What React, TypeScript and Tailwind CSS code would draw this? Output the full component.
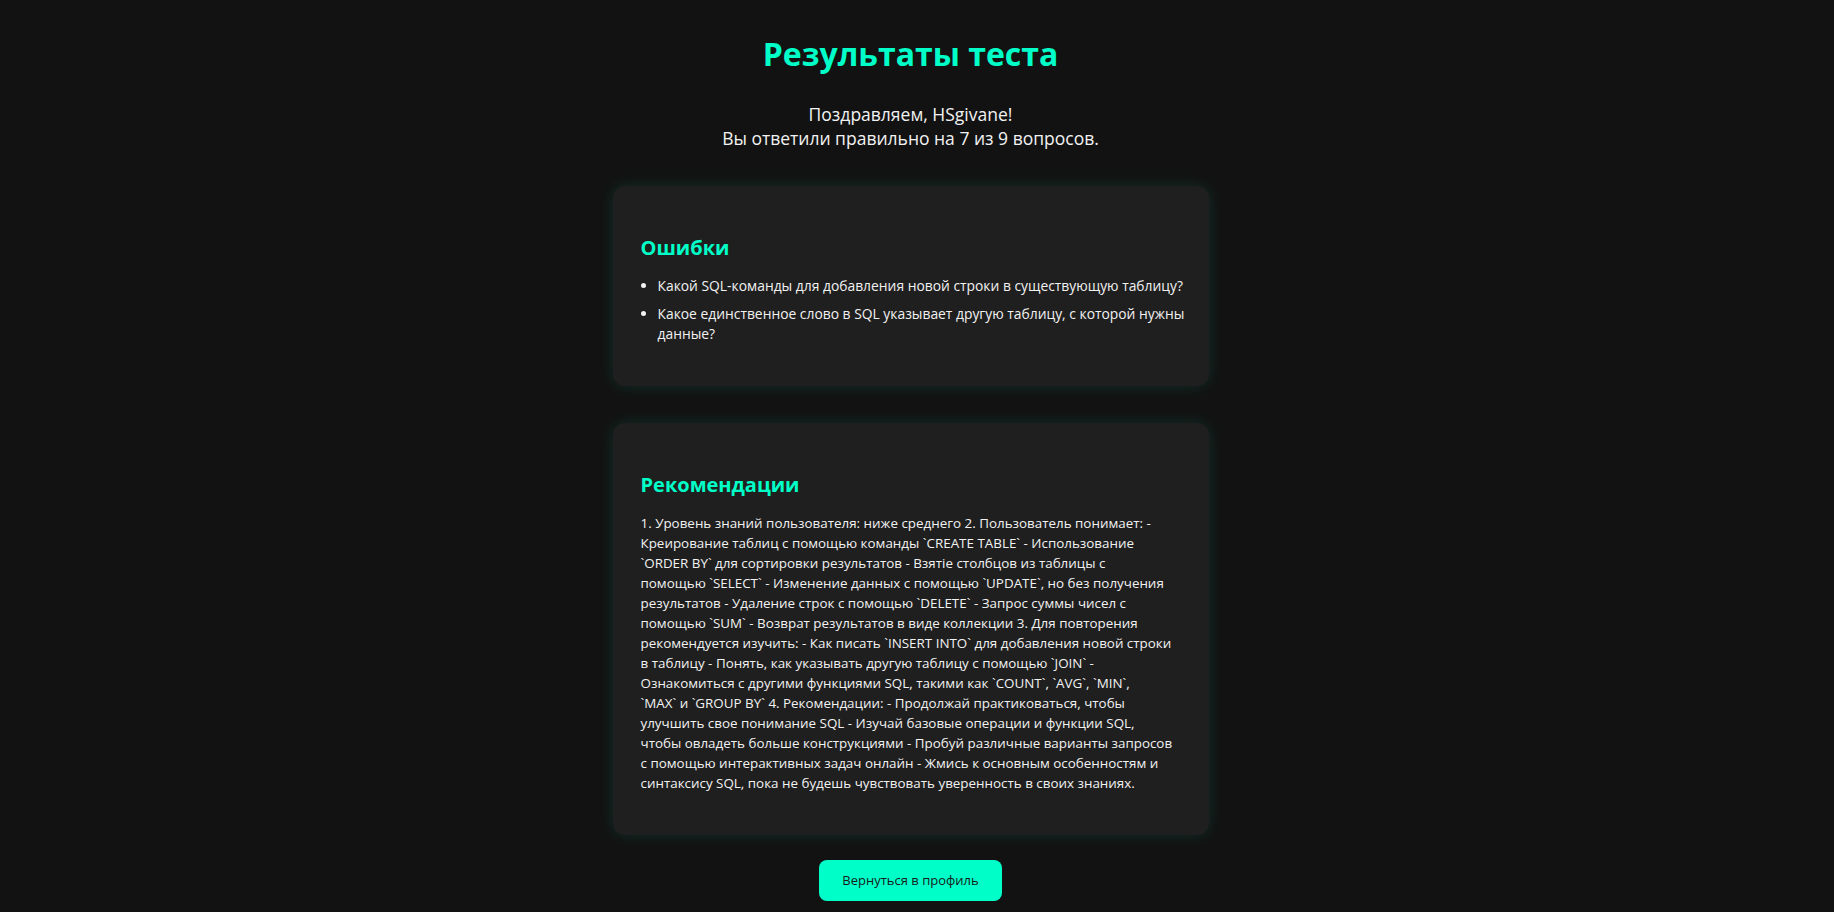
// lines are kept as in the original layout so the wrap matches
const mistakes: string[][] = [
  ['Какой SQL-команды для добавления новой строки в существующую таблицу?'],
  ['Какое единственное слово в SQL указывает другую таблицу, с которой нужны', 'данные?'],
]

const recommendations = [
  '1. Уровень знаний пользователя: ниже среднего 2. Пользователь понимает: -',
  'Креирование таблиц с помощью команды `CREATE TABLE` - Использование',
  '`ORDER BY` для сортировки результатов - Взятie столбцов из таблицы с',
  'помощью `SELECT` - Изменение данных с помощью `UPDATE`, но без получения',
  'результатов - Удаление строк с помощью `DELETE` - Запрос суммы чисел с',
  'помощью `SUM` - Возврат результатов в виде коллекции 3. Для повторения',
  'рекомендуется изучить: - Как писать `INSERT INTO` для добавления новой строки',
  'в таблицу - Понять, как указывать другую таблицу с помощью `JOIN` -',
  'Ознакомиться с другими функциями SQL, такими как `COUNT`, `AVG`, `MIN`,',
  '`MAX` и `GROUP BY` 4. Рекомендации: - Продолжай практиковаться, чтобы',
  'улучшить свое понимание SQL - Изучай базовые операции и функции SQL,',
  'чтобы овладеть больше конструкциями - Пробуй различные варианты запросов',
  'с помощью интерактивных задач онлайн - Жмись к основным особенностям и',
  'синтаксису SQL, пока не будешь чувствовать уверенность в своих знаниях.',
]

interface CardProps {
  title: string
  children: React.ReactNode
}

function Card({ title, children }: CardProps) {
  return (
    <section className="w-[596px] rounded-xl bg-[#1f1f1f] px-[28px] pt-[46px] pb-[42px] shadow-[0_0_16px_rgba(0,255,200,0.12)]">
      <h2 className="text-[20px] leading-[32px] font-bold text-[#00ffc8]">{title}</h2>
      <div className="mt-[12px]">{children}</div>
    </section>
  )
}

export default function App() {
  return (
    <div
      className="min-h-screen bg-[#121212] text-[#f2f2f2] pr-[13px] pt-[32px] pb-[9px] flex flex-col items-center"
      style={{ fontFamily: '"Open Sans", "Noto Sans", sans-serif' }}
    >
      <h1 className="text-[32px] leading-[44px] font-bold text-[#00ffc8]">Результаты теста</h1>
      <div className="mt-[26px] text-center text-[17.5px] leading-[24px]">
        <p>Поздравляем, HSgivane!</p>
        <p>Вы ответили правильно на 7 из 9 вопросов.</p>
      </div>

      <div className="mt-[36px] flex flex-col gap-[37px]">
        <Card title="Ошибки">
          <ul className="mt-[3px] list-disc pl-[17px] text-[13.85px] leading-[20px] space-y-[8px]">
            {mistakes.map((lines, i) => (
              <li key={i}>
                {lines.map((l, j) => (
                  <span key={j} className="block whitespace-nowrap">
                    {l}
                  </span>
                ))}
              </li>
            ))}
          </ul>
        </Card>
        <Card title="Рекомендации">
          <p className="text-[13.4px] leading-[20px]">
            {recommendations.map((l, i) => (
              <span key={i} className="block whitespace-nowrap">
                {l}
              </span>
            ))}
          </p>
        </Card>
      </div>

      <button className="mt-[25px] h-[41px] w-[183px] rounded-lg bg-[#00ffc8] text-[13px] text-[#1a1a1a]">
        Вернуться в профиль
      </button>
    </div>
  )
}
